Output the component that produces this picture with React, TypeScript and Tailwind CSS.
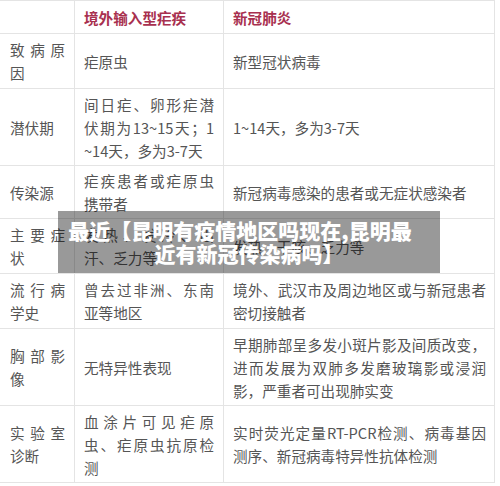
import React from "react";

type Row = { h: string; a: string[]; b: string[]; c: string[] };

const rows: Row[] = [
  { h: "h-[55px]", a: ["致病原", "因"], b: ["疟原虫"], c: ["新型冠状病毒"] },
  {
    h: "h-[77px]",
    a: ["潜伏期"],
    b: ["间日疟、卵形疟潜", "伏期为13~15天；1", "~14天，多为3-7天"],
    c: ["1~14天，多为3-7天"],
  },
  {
    h: "h-[53px]",
    a: ["传染源"],
    b: ["疟疾患者或疟原虫", "携带者"],
    c: ["新冠病毒感染的患者或无症状感染者"],
  },
  {
    h: "h-[55px]",
    a: ["主要症", "状"],
    b: ["发热、发冷、出", "汗、乏力等"],
    c: ["发热、干咳、乏力等"],
  },
  {
    h: "h-[55px]",
    a: ["流行病", "学史"],
    b: ["曾去过非洲、东南", "亚等地区"],
    c: ["境外、武汉市及周边地区或与新冠患者", "密切接触者"],
  },
  {
    h: "h-[77px]",
    a: ["胸部影", "像"],
    b: ["无特异性表现"],
    c: ["早期肺部呈多发小斑片影及间质改变，", "进而发展为双肺多发磨玻璃影或浸润", "影，严重者可出现肺实变"],
  },
  {
    h: "h-[77px]",
    a: ["实验室", "诊断"],
    b: ["血涂片可见疟原", "虫、疟原虫抗原检", "测"],
    c: ["实时荧光定量RT-PCR检测、病毒基因", "测序、新冠病毒特异性抗体检测"],
  },
];

function Lines({ lines }: { lines: string[] }) {
  return (
    <div className="w-full">
      {lines.map((l, i) => (
        <div
          key={i}
          className={
            i < lines.length - 1
              ? "whitespace-nowrap text-justify [text-align-last:justify]"
              : "whitespace-nowrap"
          }
        >
          {l}
        </div>
      ))}
    </div>
  );
}

export default function App() {
  return (
    <div
      lang="zh-CN"
      className="relative w-[500px] h-[486px] bg-white overflow-hidden font-['Noto_Sans_CJK_SC','Noto_Sans_CJK_JP',sans-serif]"
    >
      <div className="w-[495px] grid grid-cols-[75px_149px_271px] border-t border-[#e4e4e4] text-[14.6px] leading-[23px] text-[#555555]">
        <div className="h-[33px] border-r border-b border-[#e4e4e4]" />
        <div className="h-[33px] border-r border-b border-[#e4e4e4] flex items-center px-[9px] font-bold text-[#a8304f]">
          境外输入型疟疾
        </div>
        <div className="h-[33px] border-r border-b border-[#e4e4e4] flex items-center px-[9px] font-bold text-[#a8304f]">
          新冠肺炎
        </div>
        {rows.map((r, i) => (
          <React.Fragment key={i}>
            <div className={`${r.h} border-r border-b border-[#e4e4e4] flex items-center pl-[10px] pr-[9px]`}>
              <Lines lines={r.a} />
            </div>
            <div className={`${r.h} border-r border-b border-[#e4e4e4] flex items-center px-[9px]`}>
              <Lines lines={r.b} />
            </div>
            <div className={`${r.h} border-r border-b border-[#e4e4e4] flex items-center pl-[9px] pr-[8px]`}>
              <Lines lines={r.c} />
            </div>
          </React.Fragment>
        ))}
      </div>
      <div className="absolute left-[58px] top-[211px] w-[382px] h-[62px] bg-black/40 flex flex-col items-center justify-center text-white font-black text-[21px] leading-[23px]">
        <div className="whitespace-nowrap mr-[18px]">最近【昆明有疫情地区吗现在,昆明最</div>
        <div className="whitespace-nowrap">近有新冠传染病吗】</div>
      </div>
    </div>
  );
}
